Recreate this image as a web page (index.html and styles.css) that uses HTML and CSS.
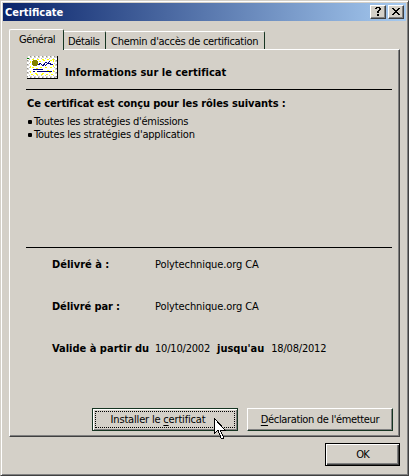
FILE: index.html
```
<!DOCTYPE html>
<html lang="fr">
<head>
<meta charset="utf-8">
<title>Certificate</title>
<link rel="stylesheet" href="styles.css">
</head>
<body>
<div class="window">
  <header class="titlebar">
    <span class="title"><b class="w-title">Certificate</b></span>
    <span class="sysbtn"><svg width="12" height="10" shape-rendering="crispEdges"><path d="M4 .5h4M3 1.5h2M7 1.5h2M7 2.5h2M6 3.5h2M5 4.500h2M5 5.500h2M5 7.500h2M5 8.500h2" stroke="#000"/></svg></span>
    <span class="sysbtn close"><svg width="12" height="10" shape-rendering="crispEdges"><path d="M2 1.5h2M8 1.5h2M3 2.5h2M7 2.5h2M4 3.5h4M5 4.5h2M4 5.5h4M3 6.5h2M7 6.5h2M2 7.5h2M8 7.5h2" stroke="#000"/></svg></span>
  </header>
  <nav class="tabs">
    <span class="tab active"><span class="w-gen">Général</span></span>
    <span class="tab details"><span class="w-det">Détails</span></span>
    <span class="tab chain"><span class="w-chain">Chemin d'accès de certification</span></span>
  </nav>
  <main class="panel">
    <div class="heading">
      <svg class="cert" width="31" height="23" shape-rendering="crispEdges">
        <rect width="30" height="22" fill="#d4d0c8"/>
        <path d="M1 1h28M1 21h28" stroke="#fff" stroke-width="2" stroke-dasharray="2 2"/>
        <path d="M1 2v18M29 2v18" stroke="#fff" stroke-width="2" stroke-dasharray="2 2"/>
        <path d="M3 .5h26M3 21.500h26" stroke="#909090" stroke-dasharray="1 3"/>
        <path d="M.5 4v17M29.500 4v17" stroke="#909090" stroke-dasharray="1 3"/>
        <rect x="2" y="2" width="26" height="18" fill="#fff"/>
        <path d="M2 2.500h26M2 19.500h26M2.500 3v16M27.500 3v16" stroke="#c0c0c0" stroke-dasharray="1 3"/>
        <path d="M5 3.500h22M4 18.500h22M3.500 5v13M26.500 4v14" stroke="#ffff00" stroke-dasharray="2 3"/>
        <path d="M12 5.500h2M16 4.500h2M23 4.500h2M13 11.500h2M18 11.500h2M23 11.500h2M5 11.500h2M9 12.500h2M20 14.500h2M8 17.500h2M15 17.500h2M22 16.500h2" stroke="#ffff00"/>
        <path d="M6 4h4v1h1v4h-1v1h-4v-1h-1v-4h1z" fill="#808000"/>
        <path d="M11 8.500h2M12 7.500h2M14 8.500h1M15 9.500h2M16 8.500h2M17 7.500h1M18 6.500h2M18 9.500h1M19 8.500h1M20 7.500h2M21 6.500h1M22 5.500h1M22 7.500h2M23 8.500h3M6 13.500h10M6 15.500h2M10 15.500h15" stroke="#000080"/>
        <path d="M0 2.500h2" stroke="#008000"/>
        <path d="M30.500 0v23M0 22.500h31" stroke="#000"/>
      </svg>
      <b class="w-info">Informations sur le certificat</b>
    </div>
    <section class="roles">
      <b class="w-roles">Ce certificat est conçu pour les rôles suivants :</b>
      <ul>
        <li><span class="w-r1">Toutes les stratégies d'émissions</span></li>
        <li><span class="w-r2">Toutes les stratégies d'application</span></li>
      </ul>
    </section>
    <dl class="facts">
      <div><dt><b class="w-to">Délivré à :</b></dt><dd><span class="w-ca">Polytechnique.org CA</span></dd></div>
      <div><dt><b class="w-by">Délivré par :</b></dt><dd><span class="w-ca">Polytechnique.org CA</span></dd></div>
      <div><dt><b class="w-valid">Valide à partir du</b></dt><dd class="dates"><span class="w-date">10/10/2002</span><b class="w-until">jusqu'au</b><span class="w-date">18/08/2012</span></dd></div>
    </dl>
    <div class="actions">
      <button class="btn focused"><span class="w-inst">Installer le <u>c</u>ertificat</span></button>
      <button class="btn"><span class="w-decl"><u>D</u>éclaration de l'émetteur</span></button>
    </div>
  </main>
  <footer class="footer"><button class="btn ok"><span class="w-ok">OK</span></button></footer>
</div>
<svg class="cursor" width="13" height="22" shape-rendering="crispEdges"><path d="M.5 .5v15l3.500-3.500 3 8h2v-2l-3-6h5z" fill="#fff" stroke="#000"/></svg>
</body>
</html>
```
FILE: styles.css
```
* { box-sizing: border-box; }
body {
  margin: 0;
  background: #d4d0c8;
  color: #000;
  font: 11px/13px "DejaVu Sans Condensed", "DejaVu Sans", sans-serif;
  font-stretch: condensed;
}
svg { display: block; }
b, span { white-space: nowrap; }
.window {
  width: 409px;
  height: 476px;
  padding: 2px 1px 0 2px;
  border: 1px solid;
  border-color: #d4d0c8 #404040 #404040 #d4d0c8;
  box-shadow: inset 1px 1px #fff, inset -1px -1px #808080;
}
.titlebar {
  display: flex;
  align-items: flex-start;
  width: 403px;
  height: 18px;
  padding: 2px 2px 0;
  background: linear-gradient(to right, #0a246a, #a6caf0);
  color: #fff;
}
.title { flex: 1; padding-top: 1px; }
.sysbtn {
  width: 16px;
  height: 14px;
  padding: 2px 1px;
  background: #d4d0c8;
  border: 1px solid;
  border-color: #fff #404040 #404040 #fff;
  box-shadow: inset -1px -1px #808080;
}
.sysbtn svg { margin: -1px 0 0 0; }
.close { margin-left: 2px; }
.tabs {
  display: flex;
  align-items: flex-end;
  height: 28px;
  margin-left: 6px;
}
.tab {
  height: 18px;
  padding: 3px 0 0 4px;
  border-top: 1px solid #fff;
  border-right: 1px solid #163522;
  border-radius: 0 2px 0 0;
}
.active {
  position: relative;
  width: 55px;
  height: 21px;
  margin-bottom: -1px;
  padding: 3px 0 0 9px;
  background: #d4d0c8;
  border-left: 1px solid #fff;
  border-radius: 2px 2px 0 0;
}
.details { width: 42px; }
.chain { width: 159px; padding-left: 5px; }
.panel {
  width: 391px;
  height: 388px;
  margin-left: 6px;
  padding: 6px 6px 0 16px;
  border: 1px solid;
  border-color: #fff #404040 #404040 #fff;
  box-shadow: inset -1px -1px #808080;
}
.heading {
  display: flex;
  gap: 7px;
  width: 366px;
  height: 34px;
  border-bottom: 1px solid #000;
}
.cert { margin-left: 1px; }
.heading b { padding-top: 10px; }
.roles {
  width: 366px;
  height: 158px;
  padding: 7px 1px 0;
  border-bottom: 1px solid #000;
}
.roles b { display: block; }
ul { margin: 5px 0 0; padding: 0; list-style: none; }
li { display: flex; align-items: center; height: 13px; gap: 2px; }
li::before { content: ""; width: 4px; height: 4px; margin-left: 1px; border-radius: 1px; background: #000; }
.facts { margin: 10px 0 0 26px; }
.facts div { display: flex; height: 42px; }
dt { width: 103px; }
dd { margin: 0; }
.dates { display: flex; }
.dates b { margin: 0 7px; }
.actions { display: flex; gap: 9px; margin: 24px 0 0 66px; }
.btn {
  width: 146px;
  height: 23px;
  padding: 0;
  background: #d4d0c8;
  border: 1px solid;
  border-color: #fff #163522 #163522 #fff;
  box-shadow: inset -1px -1px #808080;
  color: #000;
  font: inherit;
}
.btn span { display: inline-block; }
.focused {
  border-color: #163522;
  box-shadow: inset 1px 1px #fff, inset -1px -1px #808080;
  outline: 1px dotted #000;
  outline-offset: -4px;
}
.focused span { position: relative; left: -7px; }
u { text-underline-offset: 2px; text-decoration-thickness: 1px; }
.footer { display: flex; margin: 6px 0 0 322px; }
.ok {
  width: 75px;
  border-color: #000;
  box-shadow: inset 1px 1px #fff, inset -1px -1px #404040, inset -2px -2px #808080;
}
.cursor { position: absolute; left: 214px; top: 418px; }

/* Tracking that brings each label to Tahoma's width */
.w-gen, .w-det { letter-spacing: -.4px; }
.w-chain { letter-spacing: -.28px; }
.w-info { letter-spacing: .03px; }
.w-roles { letter-spacing: -.08px; }
.w-r1 { letter-spacing: -.25px; }
.w-r2 { letter-spacing: -.21px; }
.w-ca { letter-spacing: -.1px; }
.w-by { letter-spacing: -.1px; }
.w-date { letter-spacing: -.2px; }
.w-inst { letter-spacing: -.18px; }
.w-decl { letter-spacing: -.35px; }
.w-ok { letter-spacing: -1px; }
```
